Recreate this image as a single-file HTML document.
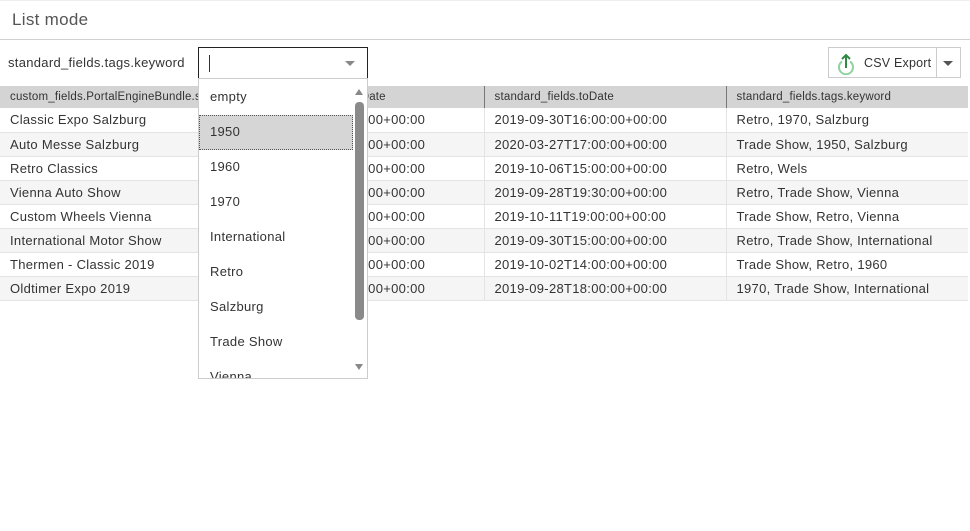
<!DOCTYPE html>
<html><head><meta charset="utf-8"><style>
*{box-sizing:border-box;margin:0;padding:0}
body{width:970px;height:531px;background:#fff;font-family:"Liberation Sans",sans-serif;color:#333;position:relative;overflow:hidden;font-size:13px;letter-spacing:0.3px}
.title{position:absolute;left:0;top:0;width:970px;height:40px;border-bottom:1px solid #d0d0d0;border-top:1px solid #eee}
.title span{position:absolute;left:12px;top:9px;font-size:17px;color:#555}
.lbl{position:absolute;left:8px;top:55px;font-size:13px}
.inp{position:absolute;left:198px;top:47px;width:170px;height:32px;border:1px solid #222;background:#fff}
.inp .cur{position:absolute;left:10px;top:7px;width:1px;height:17px;background:#333}
.arr{position:absolute;width:0;height:0;border-left:5px solid transparent;border-right:5px solid transparent;border-top:5px solid #888}
.btn{position:absolute;left:828px;top:47px;width:133px;height:31px;border:1px solid #ccc;background:#fff}
.btn .sep{position:absolute;left:107px;top:0;width:1px;height:29px;background:#ccc}
.btn .t{position:absolute;left:35px;top:8px;font-size:12.5px;letter-spacing:0.2px}
table{position:absolute;left:0;top:86px;width:968px;border-collapse:collapse;table-layout:fixed}
th{height:22px;background:#d4d4d4;font-weight:normal;font-size:11.5px;text-align:left;padding-left:10px;border-left:1px solid #777;white-space:nowrap;overflow:hidden;letter-spacing:0.2px}
th:first-child{border-left:none}
td{height:24px;padding-left:10px;font-size:13px;border-left:1px solid #e4e4e4;border-bottom:1px solid #e4e4e4;white-space:nowrap;overflow:hidden}
td:first-child{border-left:none}
tr:nth-child(odd) td{background:#f5f5f5}
.dd{position:absolute;left:198px;top:78px;width:170px;height:301px;border:1px solid #ccc;background:#fff;overflow:hidden}
.dd div.o{position:absolute;left:11px;font-size:13px}
.sel{position:absolute;left:0;top:36px;width:154px;height:35px;background:#d6d6d6;border:1px dotted #555}
.sb{position:absolute;left:156px;top:23px;width:9px;height:218px;background:#8a8a8a;border-radius:4px}
</style></head><body>
<div class="title"><span>List mode</span></div>
<div class="lbl">standard_fields.tags.keyword</div>
<div class="inp"><div class="cur"></div><div class="arr" style="left:146px;top:13px"></div></div>
<div class="btn">
<svg style="position:absolute;left:6px;top:3px" width="22" height="24" viewBox="0 0 22 24"><path d="M7 10.5A7 7 0 1 0 15 10.5" fill="none" stroke="#8fd39f" stroke-width="2"/><path d="M11 17V4M7 8l4-4 4 4" fill="none" stroke="#2e8a45" stroke-width="2"/></svg>
<span class="t">CSV Export</span><div class="sep"></div><div class="arr" style="left:114px;top:13px;border-top-color:#555"></div></div>
<table>
<colgroup><col style="width:242px"><col style="width:242px"><col style="width:242px"><col style="width:242px"></colgroup>
<tr><th>custom_fields.PortalEngineBundle.sy</th><th>standard_fields.fromDate</th><th>standard_fields.toDate</th><th>standard_fields.tags.keyword</th></tr>
<tr><td>Classic Expo Salzburg</td><td>2019-09-28T00:00:00+00:00</td><td>2019-09-30T16:00:00+00:00</td><td>Retro, 1970, Salzburg</td></tr>
<tr><td>Auto Messe Salzburg</td><td>2020-03-25T00:00:00+00:00</td><td>2020-03-27T17:00:00+00:00</td><td>Trade Show, 1950, Salzburg</td></tr>
<tr><td>Retro Classics</td><td>2019-10-04T00:00:00+00:00</td><td>2019-10-06T15:00:00+00:00</td><td>Retro, Wels</td></tr>
<tr><td>Vienna Auto Show</td><td>2019-09-26T00:00:00+00:00</td><td>2019-09-28T19:30:00+00:00</td><td>Retro, Trade Show, Vienna</td></tr>
<tr><td>Custom Wheels Vienna</td><td>2019-10-09T00:00:00+00:00</td><td>2019-10-11T19:00:00+00:00</td><td>Trade Show, Retro, Vienna</td></tr>
<tr><td>International Motor Show</td><td>2019-09-28T00:00:00+00:00</td><td>2019-09-30T15:00:00+00:00</td><td>Retro, Trade Show, International</td></tr>
<tr><td>Thermen - Classic 2019</td><td>2019-09-30T00:00:00+00:00</td><td>2019-10-02T14:00:00+00:00</td><td>Trade Show, Retro, 1960</td></tr>
<tr><td>Oldtimer Expo 2019</td><td>2019-09-26T00:00:00+00:00</td><td>2019-09-28T18:00:00+00:00</td><td>1970, Trade Show, International</td></tr>
</table>
<div class="dd">
<div class="sel"></div>
<div class="o" style="top:10px">empty</div>
<div class="o" style="top:45px">1950</div>
<div class="o" style="top:80px">1960</div>
<div class="o" style="top:115px">1970</div>
<div class="o" style="top:150px">International</div>
<div class="o" style="top:185px">Retro</div>
<div class="o" style="top:220px">Salzburg</div>
<div class="o" style="top:255px">Trade Show</div>
<div class="o" style="top:290px">Vienna</div>
<div class="sb"></div>
<div class="arr" style="left:156px;top:10px;border-top:none;border-bottom:6px solid #888;border-left-width:4.5px;border-right-width:4.5px"></div>
<div class="arr" style="left:156px;top:285px;border-top:6px solid #888;border-left-width:4.5px;border-right-width:4.5px"></div>
</div>
</body></html>
